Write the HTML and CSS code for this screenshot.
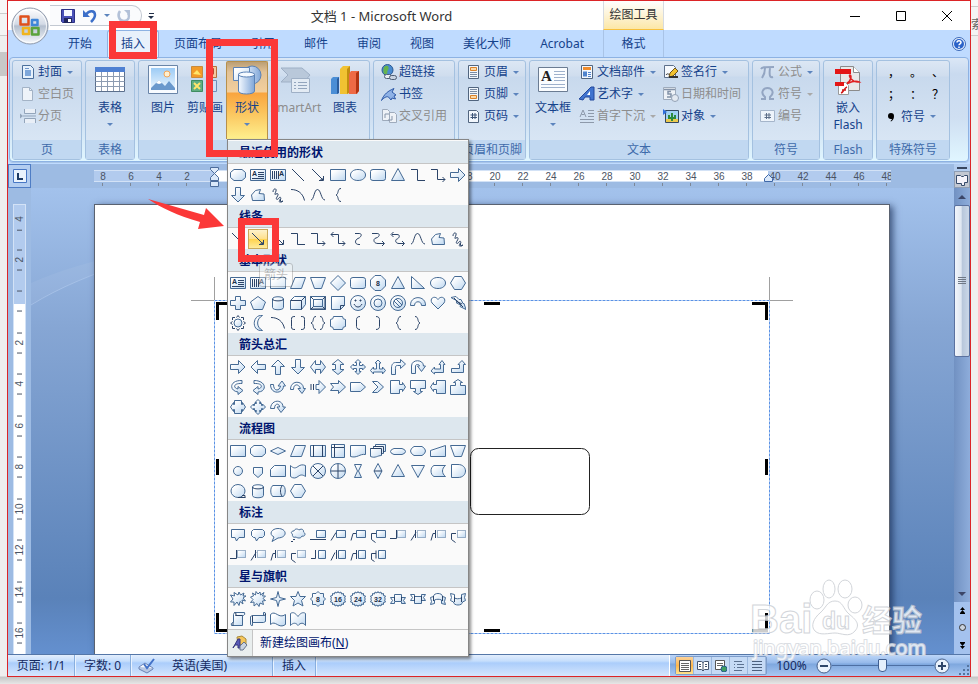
FILE: index.html
```html
<!DOCTYPE html>
<html lang="zh-CN">
<head>
  <meta charset="utf-8">
  <title>文档 1 - Microsoft Word</title>
  <link rel="stylesheet" href="styles.css">
</head>
<body>
  <!-- shared gradients -->
  <svg class="defs" width="0" height="0">
    <defs>
      <linearGradient id="shapeFill" x1="0" y1="0" x2="1" y2="1">
        <stop offset="0.2" stop-color="#ffffff"/><stop offset="1" stop-color="#bdd7f0"/>
      </linearGradient>
      <linearGradient id="blueFill" x1="0" y1="0" x2="1" y2="0">
        <stop offset="0" stop-color="#f4f9ff"/><stop offset="1" stop-color="#7fa6d8"/>
      </linearGradient>
      <linearGradient id="orbFill" x1="0" y1="0" x2="0" y2="1">
        <stop offset="0" stop-color="#ffffff"/><stop offset="0.45" stop-color="#d3dae6"/>
        <stop offset="0.5" stop-color="#b4bfcf"/><stop offset="1" stop-color="#f6f9fd"/>
      </linearGradient>
      <linearGradient id="skyFill" x1="0" y1="0" x2="0" y2="1">
        <stop offset="0" stop-color="#9ccbf5"/><stop offset="1" stop-color="#eef7ff"/>
      </linearGradient>
    </defs>
  </svg>

  <div class="behind behind-left"></div>

  <div class="window">
    <header class="header">
      <div class="title-left">
        <div class="quick">
          <button title="保存"><svg width="16" height="16" viewBox="0 0 16 16"><path d="M1.500 1.500h13v13h-12l-1-1z" fill="#4a52b8" stroke="#2c3186"/><path d="M4 2h8v6H4z" fill="#f5f8ff"/><path d="M4 10h8v5H4z" fill="#20265e"/><path d="M8 11h3v3H8z" fill="#fff"/></svg></button>
          <button title="撤消"><svg width="16" height="16" viewBox="0 0 16 16"><path d="M4 6.500C7 2 13 2 13 7c0 3-2 5-4 7" fill="none" stroke="#3c6fc9" stroke-width="2.500"/><path d="M1 2v7h7z" fill="#3c6fc9"/></svg></button>
          <i class="caret"></i>
          <button title="恢复"><svg width="16" height="16" viewBox="0 0 16 16"><path d="M4 3C1 7 3 13 8 13s6-5 4-8" fill="none" stroke="#b3c1d8" stroke-width="2.500"/><path d="M8 2h6v6z" fill="#b3c1d8"/></svg></button>
        </div>
        <button class="quick-more" title="自定义快速访问工具栏"><i class="bar"></i><i class="caret"></i></button>
        <h1>文档 1 - Microsoft Word</h1>
      </div>
      <div class="context-title">绘图工具</div>
      <div class="controls">
        <button title="最小化"><svg width="12" height="12" viewBox="0 0 12 12"><path d="M1 6.500h10" stroke="#000"/></svg></button>
        <button title="最大化"><svg width="12" height="12" viewBox="0 0 12 12"><path d="M1.500 1.500h9v9h-9z" fill="none" stroke="#000"/></svg></button>
        <button title="关闭"><svg width="12" height="12" viewBox="0 0 12 12"><path d="M1 1l10 10M11 1L1 11" stroke="#000"/></svg></button>
      </div>

      <nav class="tabs">
        <button>开始</button>
        <button class="active">插入</button>
        <button>页面布局</button>
        <button>引用</button>
        <button>邮件</button>
        <button>审阅</button>
        <button>视图</button>
        <button>美化大师</button>
        <button>Acrobat</button>
      </nav>
      <div class="context-tab"><button>格式</button></div>
      <div class="help"><button title="帮助"><svg width="14" height="14" viewBox="0 0 14 14"><circle cx="7" cy="7" r="6.500" fill="#e8f1fd" stroke="#3a68b8"/><circle cx="7" cy="7" r="5" fill="#2b63c9"/><path d="M5 5.500c0-2.500 4-2.500 4 0C9 7 7 6.800 7 8.300M7 9.500v1.500" fill="none" stroke="#fff" stroke-width="1.500"/></svg></button></div>

      <button class="orb" title="Office 按钮">
        <svg width="40" height="40" viewBox="0 0 40 40">
          <circle cx="20" cy="20" r="18" fill="url(#orbFill)" stroke="#8e99ab"/>
          <circle cx="20" cy="20" r="16.500" fill="none" stroke="#fff" stroke-opacity=".8"/>
          <g fill="none" stroke-width="2.500" stroke-linejoin="round">
            <path d="M10.500 10.500h8v8h-8z" stroke="#e0501c"/>
            <path d="M22 14h5.500v5H22z" stroke="#3f86d8"/>
            <path d="M13 22h6v6h-6z" stroke="#f0b41c"/>
            <path d="M22 22h6.500v6.500H22z" stroke="#5aa33c"/>
          </g>
        </svg>
      </button>
    </header>

    <section class="ribbon">
      <div class="group g-page">
        <div class="body">
          <div class="rows">
            <button><svg class="ic" viewBox="0 0 16 16"><path d="M2.500 1.500h8l3 3v10h-11z" fill="#e6f1fc" stroke="#4a6f9c"/><path d="M5 6h6v6H5z" fill="#7ea7da"/><path d="M5 4.500h4" stroke="#6e94c8"/></svg>封面<i class="caret"></i></button>
            <button disabled><svg class="ic" viewBox="0 0 16 16"><path d="M2.500 1.500h7l3 3v10h-10z" fill="#eef3f9" stroke="#a3b3c6"/><path d="M9.500 1.500v3h3" fill="none" stroke="#a3b3c6"/></svg>空白页</button>
            <button disabled><svg class="ic" viewBox="0 0 16 16"><path d="M4.500 1v4.500h11V1M4.500 15v-4.500h11V15M3 8h13" fill="#e9eff7" stroke="#93a5bb"/><path d="M0 5.500l3 2.500-3 2.500z" fill="#93a5bb"/></svg>分页</button>
          </div>
        </div>
        <footer>页</footer>
      </div>

      <div class="group g-table">
        <div class="body">
          <button class="big"><svg class="ic32" viewBox="0 0 32 32"><path d="M1.500 3.500h29v24h-29z" fill="#fff" stroke="#5b6f8c"/><path d="M1 3h30v5H1z" fill="#4f80d2"/><path d="M1.500 12.500h29M1.500 17.500h29M1.500 22.500h29M7.500 8v19M13.500 8v19M19.500 8v19M25.500 8v19" stroke="#8d9cb2"/></svg><span>表格</span><i class="caret"></i></button>
        </div>
        <footer>表格</footer>
      </div>

      <div class="group g-art">
        <div class="body">
          <button class="big"><svg class="ic32" viewBox="0 0 32 32"><path d="M1.500 1.500h29v28h-29z" fill="#f8fbff" stroke="#6a85a8"/><path d="M4 4h24v22H4z" fill="url(#skyFill)"/><circle cx="20" cy="10" r="3" fill="#fff0d0" stroke="#f3a659"/><path d="M4 24l8-8 6 6 4-5 6 7v2H4z" fill="#6a98cc"/><path d="M9 19l3-3 3 3-3 1z" fill="#fff"/></svg><span>图片</span></button>
          <button class="big"><svg class="ic32" viewBox="0 0 32 32"><path d="M2.500 2.500h11v11h-11z" fill="#f29b28" stroke="#c98a3c"/><path d="M4 10l4-4 4 5z" fill="#ffe66b"/><path d="M17.500 2.500h10v11h-10z" fill="#f5c9a0" stroke="#b4713c"/><path d="M21 6l4-2v7z" fill="#c1432d"/><path d="M2.500 16.500h11v11h-11z" fill="#5fae82" stroke="#3f8d62"/><path d="M5 19l6 6M11 19l-6 6" stroke="#ffe66b" stroke-width="2"/><path d="M17.500 16.500h10v11h-10z" fill="#cfe0f5" stroke="#6e8fb8"/></svg><span>剪贴画</span></button>
          <div class="dropdown">
            <button class="big open"><svg class="ic32" viewBox="0 0 32 32"><circle cx="21" cy="11" r="9" fill="url(#blueFill)" stroke="#5b82b5"/><path d="M2.500 3.500h16v13h-16z" fill="url(#shapeFill)" stroke="#5b82b5"/><path d="M7.500 10v17c0 4 16 4 16 0V10z" fill="url(#blueFill)" stroke="#5b82b5"/><ellipse cx="15.500" cy="10.500" rx="8" ry="2.500" fill="#f5faff" stroke="#5b82b5"/></svg><span>形状</span><i class="caret"></i></button>
            <div class="menu" id="shapeMenu">
              <div id="sections"></div>
              <button class="new-canvas">
                <span class="strip"><svg width="16" height="16" viewBox="0 0 16 16"><path d="M5 2l5-1 4 3v6H6z" fill="#f5c65a" stroke="#a88a3a"/><path d="M1 13L6 4l2 0v9H6v-3H3z" fill="#5a5bb8" stroke="#34357e"/><path d="M8 11l4-4 3 3-4 5H8z" fill="#c9d3e2" stroke="#66758c"/></svg></span>
                <span>新建绘图画布(<u>N</u>)</span>
              </button>
              <div class="tip">箭头</div>
            </div>
          </div>
          <button class="big wide" disabled><svg class="ic32" viewBox="0 0 32 32"><path d="M1 4h21l8 7-6 7H1l7-7z" fill="#b9c8da" stroke="#9fb0c6"/><path d="M11.500 14.500h18v14h-18z" fill="#e3ebf4" stroke="#9fb0c6"/><path d="M14 18.500h2m2 0h9m-13 3h2m2 0h9m-13 3h2m2 0h9" stroke="#93a5bd"/></svg><span>SmartArt</span></button>
          <button class="big"><svg class="ic32" viewBox="0 0 32 32"><path d="M2 15l2-2h6v16l-2 1H2z" fill="#4a8ed6"/><path d="M8 15l2-2v16l-2 1z" fill="#2a5d9f"/><path d="M11 5l3-3h7v26l-2 2h-8z" fill="#f1c232"/><path d="M18 5l3-3v26l-3 2z" fill="#c28e0e"/><path d="M20 10l2-3h8v20l-2 3h-8z" fill="#ee6a45"/><path d="M27 9l3-2v20l-3 3z" fill="#b23412"/></svg><span>图表</span></button>
        </div>
        <footer>插图</footer>
      </div>

      <div class="group g-link">
        <div class="body">
          <div class="rows">
            <button><svg class="ic" viewBox="0 0 16 16"><circle cx="6.500" cy="6" r="5.500" fill="#4a8bd0" stroke="#2c5a94"/><path d="M3 3c3-3 6 0 4 3s1 3-2 4-3-4-2-7z" fill="#67b44c"/><rect x="3.500" y="10.500" width="7" height="4" rx="2" fill="#e8edf4" stroke="#4f5f75"/><rect x="8.500" y="11.500" width="7" height="4" rx="2" fill="#c9d3e0" stroke="#4f5f75"/></svg>超链接</button>
            <button><svg class="ic" viewBox="0 0 16 16"><path d="M.5 14.500C3 8 7 5 13 2.500l-2 3.500 4 3-2 1 1.500 3-3.500-1-1 2-2.500-3c-2-1-5 1-7 3.500z" fill="#8fb2e6" stroke="#2f5aa8"/></svg>书签</button>
            <button disabled><svg class="ic" viewBox="0 0 16 16"><path d="M1.500 1.500h5l2 2v9h-7zM8.500 4.500h5l2 2v8h-7z" fill="#eef2f7" stroke="#9eabbc"/><path d="M4 10V6h4m3 2v4H7" fill="none" stroke="#8796ab"/></svg>交叉引用</button>
          </div>
        </div>
        <footer>链接</footer>
      </div>

      <div class="group g-hf">
        <div class="body">
          <div class="rows">
            <button><svg class="ic" viewBox="0 0 16 16"><path d="M2.500 1.500h10v13h-10z" fill="#f2f7fd" stroke="#51657f"/><path d="M4.500 3.500h6v3h-6z" fill="#fbd9a8" stroke="#d9822b"/><path d="M4 8.500h7M4 10.500h7M4 12.500h7" stroke="#7b8ca3"/></svg>页眉<i class="caret"></i></button>
            <button><svg class="ic" viewBox="0 0 16 16"><path d="M2.500 1.500h10v13h-10z" fill="#f2f7fd" stroke="#51657f"/><path d="M4.500 9.500h6v3h-6z" fill="#fbd9a8" stroke="#d9822b"/><path d="M4 3.500h7M4 5.500h7M4 7.500h7" stroke="#7b8ca3"/></svg>页脚<i class="caret"></i></button>
            <button><svg class="ic" viewBox="0 0 16 16"><path d="M2.500 2.500h8l2 2v10h-10z" fill="#f2f7fd" stroke="#51657f"/><path d="M6.500 5v6M9 5v6M4.500 7h6.500M4.500 9.500h6.500" stroke="#3c5578"/></svg>页码<i class="caret"></i></button>
          </div>
        </div>
        <footer>页眉和页脚</footer>
      </div>

      <div class="group g-text">
        <div class="body">
          <button class="big"><svg class="ic32" viewBox="0 0 32 32"><path d="M1.500 3.500h29v24h-29z" fill="#fbfdff" stroke="#6b7c93"/><text x="4" y="17" class="serif-a">A</text><path d="M17 7.500h11M17 10.500h11M17 13.500h11M17 16.500h11M4 20.500h24M4 23.500h24" stroke="#9eb1cc"/></svg><span>文本框</span><i class="caret"></i></button>
          <div class="rows parts">
            <button><svg class="ic" viewBox="0 0 16 16"><path d="M2.500 1.500h11v13h-11z" fill="#f2f7fd" stroke="#51657f"/><path d="M4 3h8v3H4z" fill="#ef8c2d"/><path d="M4 7.500h4v5H4z" fill="#4f83cc"/><path d="M9 8.500h3M9 10.500h3M9 12.500h3" stroke="#4f83cc"/></svg>文档部件<i class="caret"></i></button>
            <button><svg class="ic" viewBox="0 0 16 16"><path d="M0 13L12 1h3v13h-4v-3H6l-2 3z" fill="#3f73cf" stroke="#23489c"/><path d="M8 9l3-4v4z" fill="#fff"/></svg>艺术字<i class="caret"></i></button>
            <button disabled><svg class="ic" viewBox="0 0 16 16"><path d="M1 9L4 2l3 7M2.500 6.500h3M9 2.500h6M9 5.500h6M9 8.500h6M1 11.500h14M1 14.500h14" fill="none" stroke="#8d99aa"/></svg>首字下沉<i class="caret"></i></button>
          </div>
          <div class="rows">
            <button><svg class="ic" viewBox="0 0 16 16"><path d="M1.500 1.500h9l2 2v10h-11z" fill="#f6f9fd" stroke="#5c6f8a"/><path d="M3 11c2-3 3 1 5-1" fill="none" stroke="#333"/><path d="M7 9l5-5 3 3-5 5-4 1z" fill="#f2c230" stroke="#6e541c"/><path d="M6 13h9" stroke="#333" stroke-width="2"/></svg>签名行<i class="caret"></i></button>
            <button disabled><svg class="ic" viewBox="0 0 16 16"><path d="M.5 1.500h12v12H.5z" fill="#eef2f7" stroke="#9eabbc"/><path d="M1 3.500h11M8 5.500H5v2.500h3v3H4" fill="none" stroke="#8392a8" stroke-width="1.500"/><circle cx="12" cy="12" r="3.500" fill="#e3e9f1" stroke="#93a1b5"/></svg>日期和时间</button>
            <button><svg class="ic" viewBox="0 0 16 16"><path d="M2.500 2.500h13v12h-13z" fill="#9fd0f3" stroke="#33465f"/><path d="M3 11h12v3H3z" fill="#e9c94e"/><path d="M9 5v8M6 7v3h6V7" fill="none" stroke="#2c8a3c" stroke-width="2"/><path d="M0 1l4 3-4 3z" fill="#2f6fdc"/></svg>对象<i class="caret"></i></button>
          </div>
        </div>
        <footer>文本</footer>
      </div>

      <div class="group g-sym">
        <div class="body">
          <div class="rows">
            <button class="off"><svg class="ic" viewBox="0 0 16 16"><path d="M1 5c1-2 3-2 13-2M5 4c0 5-1 7-3 10M10 4c-1 8 0 10 3 9" fill="none" stroke="#93a5c2" stroke-width="2"/></svg>公式<i class="caret"></i></button>
            <button disabled><svg class="ic" viewBox="0 0 16 16"><path d="M1 13h4v-2C0 7 3 2 7.500 2S15 7 10 11v2h4" fill="none" stroke="#93a5c2" stroke-width="2"/></svg>符号<i class="caret"></i></button>
            <button disabled><svg class="ic" viewBox="0 0 16 16"><path d="M.5 2.500h14v11H.5z" fill="#eef4fb" stroke="#a5b5ca"/><path d="M6.500 5v6M9 5v6M4.500 7h6.500M4.500 9.500h6.500" stroke="#5c6e88"/></svg>编号</button>
          </div>
        </div>
        <footer>符号</footer>
      </div>

      <div class="group g-flash">
        <div class="body">
          <button class="big"><svg class="ic32" viewBox="0 0 32 32"><path d="M8.500 2.500h13l6 6v18h-19z" fill="#e9e9e9" stroke="#8b8b8b"/><path d="M21.500 2.500v6h6" fill="#fff" stroke="#8b8b8b"/><path d="M3 5h16v5H3z" fill="#e41616"/><path d="M14 20c5-2 6-9 4-9s2 8 9 7c-4-2-8 0-13 2z" fill="none" stroke="#e02020" stroke-width="1.500"/><path d="M6.500 18.500h7l3 3v9h-10z" fill="#fff" stroke="#9a9a9a"/><path d="M3 18h9v4H3z" fill="#e41616"/><path d="M9 29c3-1 3-5 6-6m-5 3h4" fill="none" stroke="#d01818" stroke-width="1.500"/></svg><span>嵌入</span><span>Flash</span></button>
        </div>
        <footer>Flash</footer>
      </div>

      <div class="group g-special">
        <div class="body">
          <div class="marks">
            <button>，</button><button>。</button><button>、</button>
            <button>；</button><button>：</button><button>？</button>
            <button class="mark-menu"><svg class="ic" viewBox="0 0 16 16"><path d="M8 5a3 3 0 1 1 0 6 3 3 0 0 1 0-6zM11 8c0 3-1 4-3 5.500L7.500 13c1-1 2-2 1.500-3z" fill="#000"/></svg>符号<i class="caret"></i></button>
          </div>
        </div>
        <footer>特殊符号</footer>
      </div>
    </section>

    <main class="work">
      <div class="tab-type"><button title="制表符"><svg width="14" height="14" viewBox="0 0 14 14"><path d="M.5.500h13v13H.5z" fill="#eaf3fd" stroke="#4877c4"/><path d="M5 4v6h5" fill="none" stroke="#1d3a63" stroke-width="2"/></svg></button></div>
      <div class="hruler">
        <div class="numbers" id="hnums"></div>
        <div class="ticks"></div>
        <svg class="indent indent-left" width="9" height="20" viewBox="0 0 9 20"><path d="M.5.500h8v2l-4 4-4-4zM4.500 6.500l4 4v3h-8v-3zM.5 14.500h8v5h-8z" fill="#dbe9fa" stroke="#4d6d9c"/></svg>
        <svg class="indent indent-right" width="9" height="8" viewBox="0 0 9 8"><path d="M.5 7.500v-3l4-4 4 4v3z" fill="#dbe9fa" stroke="#3f68a8"/></svg>
      </div>

      <div class="vruler"><div class="numbers" id="vnums"></div></div>

      <div class="desk">
        <svg class="waves" viewBox="0 0 240 180" preserveAspectRatio="none"><path d="M0 95C80 60 160 60 240 10v20C150 60 80 70 0 117z" fill="#fff" opacity=".06"/><path d="M0 117C60 80 130 66 240 26" fill="none" stroke="#c9defa" stroke-opacity=".35"/></svg>
        <div class="page">
          <svg class="canvas" width="604" height="377" viewBox="0 0 604 377">
            <path d="M0 23.500h23M23.500 0v23M579 23.500h23M578.500 0v23" stroke="#a0a0a0" fill="none"/>
            <path d="M23.500 23.500h555v333h-555z" fill="none" stroke="#5b92e5" stroke-dasharray="3 1"/>
            <path d="M26.500 43V26.500H43M293 26.500h16M561 26.500h14.500V43M26.500 182v16M575.500 182v16M26.500 336v17.500H43M293 353.500h16M575.500 336v17.500H561" fill="none" stroke="#000" stroke-width="3"/>
            <rect x="279.500" y="171.500" width="119" height="66" rx="8" fill="#fff" stroke="#222"/>
          </svg>
        </div>
      </div>

      <div class="scroll">
        <i class="split"></i>
        <button class="ruler-toggle" title="标尺"><svg width="14" height="14" viewBox="0 0 14 14"><path d="M1.500 2.500h4l1 1h2l1-1h3v7h-3v3h-3v-2h-5z" fill="#f5f3fa" stroke="#364b6b"/></svg></button>
        <button class="arrow up" title="向上"></button>
        <div class="track"><div class="thumb"></div></div>
        <button class="arrow down" title="向下"></button>
        <div class="browse">
          <button title="前一页"><svg width="9" height="9" viewBox="0 0 9 9"><path d="M4.500 1L7 4H2zM4.500 4L7 7H2zM2 7h5v1H2z"/></svg></button>
          <button title="选择浏览对象"><svg width="9" height="9" viewBox="0 0 9 9"><circle cx="4.500" cy="4.500" r="3" fill="#c9d2dd" stroke="#333"/></svg></button>
          <button title="下一页"><svg width="9" height="9" viewBox="0 0 9 9"><path d="M4.500 8L7 5H2zM4.500 5L7 2H2zM2 1h5v1H2z"/></svg></button>
        </div>
      </div>
    </main>

    <footer class="status">
      <button class="s-page">页面: 1/1</button>
      <button class="s-words">字数: 0</button>
      <button class="s-spell" title="校对"><svg width="18" height="16" viewBox="0 0 18 16"><path d="M1 9l6-4 8 5-5 4z" fill="#f7faff" stroke="#6b84b5"/><path d="M1 9v2l8 4 6-4v-1" fill="#b8c8e4" stroke="#6b84b5"/><path d="M6 6l3 4 7-9" fill="none" stroke="#4372c8" stroke-width="2"/></svg></button>
      <button class="s-lang">英语(美国)</button>
      <button class="s-mode">插入</button>
      <div class="view-tools">
        <div class="views">
          <button class="on" title="页面视图"><svg width="12" height="12" viewBox="0 0 12 12"><path d="M.5.500h11v11H.5z" fill="#fff" stroke="#555"/><path d="M2 3.500h8M2 5.500h8M2 7.500h8M2 9.500h8" stroke="#666"/></svg></button>
          <button title="阅读版式"><svg width="12" height="12" viewBox="0 0 12 12"><path d="M.5 1.500h4l1.500 1 1.500-1h4v8h-4L6 11l-1.500-1.500h-4zM6 2v9" fill="#fff" stroke="#44546e"/><path d="M2 4.500h2M2 6.500h2M8 4.500h2M8 6.500h2" stroke="#44546e"/></svg></button>
          <button title="Web 版式"><svg width="12" height="12" viewBox="0 0 12 12"><path d="M.5.500h9v9h-9z" fill="#fff" stroke="#555"/><path d="M2 3.500h6M2 5.500h6" stroke="#666"/><circle cx="9" cy="9" r="3" fill="#3f9d62" stroke="#265d8c"/></svg></button>
          <button title="大纲视图"><svg width="12" height="12" viewBox="0 0 12 12"><path d="M1 1.500h8M4 4.500h7M4 7.500h7M1 10.500h8M1 4.500h1M1 7.500h1" stroke="#5b7190"/></svg></button>
          <button title="普通视图"><svg width="12" height="12" viewBox="0 0 12 12"><path d="M1 1.500h10M1 4.500h10M1 7.500h10M1 10.500h10" stroke="#4c617f"/></svg></button>
        </div>
        <button class="percent">100%</button>
        <button class="round" title="缩小"><svg width="16" height="16" viewBox="0 0 16 16"><circle cx="8" cy="8" r="7" fill="#eaf2fc" stroke="#45608c"/><path d="M4 8h8" stroke="#2f4669" stroke-width="2"/></svg></button>
        <input type="range" min="0" max="100" value="49" aria-label="显示比例">
        <button class="round" title="放大"><svg width="16" height="16" viewBox="0 0 16 16"><circle cx="8" cy="8" r="7" fill="#eaf2fc" stroke="#45608c"/><path d="M4 8h8M8 4v8" stroke="#2f4669" stroke-width="2"/></svg></button>
        <svg class="grip" width="12" height="12" viewBox="0 0 12 12"><path d="M9 1h2v2H9zM5 5h2v2H5zM9 5h2v2H9zM1 9h2v2H1zM5 9h2v2H5zM9 9h2v2H9z" fill="#54749f"/></svg>
      </div>
    </footer>

    <svg class="watermark" width="180" height="84" viewBox="0 0 180 84">
      <g fill="#ffffff" stroke="#c8ccd2">
        <ellipse cx="67" cy="23" rx="7" ry="9"/>
        <ellipse cx="79" cy="12" rx="6" ry="9"/>
        <ellipse cx="95" cy="12" rx="7" ry="9"/>
        <ellipse cx="105" cy="28" rx="7" ry="8"/>
        <path d="M85 24c8 0 8 8 14 13s12 10 6 17-14 2-20 2-15 3-20-2-1-13 5-18 7-12 15-12z"/>
        <text x="0" y="56" class="wm-bai">Bai</text>
        <text x="72" y="52" class="wm-du">du</text>
        <text x="112" y="54" class="wm-cn">经验</text>
      </g>
      <text x="3" y="78" class="wm-url">jingyan.baidu.com</text>
    </svg>

    <!-- tutorial marks over the window -->
    <div class="mark mark-tab"></div>
    <div class="mark mark-shapes"></div>
    <div class="mark mark-arrow"></div>
    <svg class="pointer" width="78" height="34" viewBox="0 0 78 34"><path d="M0 1l56 16 2-7 18 18-26 3 2-7C30 18 12 9 0 1z" fill="#fb3838"/></svg>
  </div>

  <div class="behind behind-right"><span>索</span></div>

  <script src="shapes.js"></script>
</body>
</html>
```

FILE: styles.css
```css
:root {
	--text: #15428b;
	--off: #8d8d8d;
	--line: #8db2e3;
	--red: #fb3838;
	--shape: #456a94;
}

* {
	box-sizing: border-box;
}

body {
	margin: 0;
	min-height: 100vh;
	display: flex;
	padding-bottom: 7px;
	background: linear-gradient(#efefef 0, #efefef calc(100% - 8px), #c6c6c6 calc(100% - 7px), #e6e6e6 100%);
	font-family: "Noto Sans", "Noto Sans CJK SC", sans-serif;
	font-size: 12px;
	line-height: 16px;
	color: var(--text);
	overflow-x: hidden;
}

button {
	font: inherit;
	color: inherit;
	background: none;
	border: 0;
	padding: 0;
	margin: 0;
	white-space: nowrap;
}

svg {
	display: block;
	flex: none;
}

.defs {
	position: absolute;
}

/* what shows beside the window */
.behind {
	width: 7px;
	flex: none;
	overflow: hidden;
	background: linear-gradient(#f7f7f7 6px, #ccc 6px, #ccc 7px, #f4f4f4 7px, #f4f4f4 35px, #ccc 35px, #ccc 36px, transparent 36px);
}

.behind-left {
	background: linear-gradient(#f7f7f7 13px, #ccc 13px, #ccc 14px, #f4f4f4 14px, #f4f4f4 35px, #ccc 35px, #ccc 36px, #efefef 36px, #efefef 52px, #c8c8c8 52px, #c8c8c8 76px, transparent 76px);
}

.behind-right {
	padding-top: 17px;
	color: #666;
}

.window {
	position: relative;
	flex: 1;
	min-width: 0;
	display: flex;
	flex-direction: column;
	border: 1px solid #dc2427;
	background: #bfdbff;
}

/* title bar and tabs */
.header {
	position: relative;
	display: grid;
	grid-template-columns: 595px 61px 1fr;
	grid-template-rows: 29px 27px;
	background: linear-gradient(#fff 29px, #bfdbff 29px);
}

.title-left {
	display: flex;
	align-items: center;
}

.quick {
	display: flex;
	align-items: center;
	gap: 6px;
	height: 21px;
	width: 92px;
	margin-left: 42px;
	padding-left: 10px;
	border: 1px solid #c3c9d2;
	border-left: 0;
	border-radius: 0 10px 10px 0;
	background: #fafbfd;
}

.quick .caret {
	margin: 0;
}

.quick-more {
	display: flex;
	flex-direction: column;
	align-items: center;
	gap: 2px;
	width: 18px;
}

.bar {
	width: 5px;
	height: 1px;
	background: #222f49;
}

.quick-more .caret {
	margin: 0;
	border-top-color: #222f49;
}

.title-left h1 {
	flex: 1;
	margin: 0;
	font-size: 13px;
	font-weight: normal;
	text-align: center;
	color: #333;
}

.context-title {
	display: flex;
	align-items: center;
	justify-content: center;
	color: #333;
	border-left: 1px solid #d6dbe2;
	border-right: 1px solid #d6dbe2;
	border-bottom: 1px solid #f8c13c;
	background: linear-gradient(#fff, #fdf3d6 50%, #fce7a6);
}

.controls {
	display: flex;
	justify-content: flex-end;
}

.controls button {
	width: 46px;
	display: flex;
	align-items: center;
	justify-content: center;
}

.tabs {
	display: flex;
	gap: 1px;
	padding-left: 46px;
}

.tabs button {
	padding: 0 14px;
}

.tabs .active {
	border: 1px solid var(--line);
	border-bottom: 0;
	border-radius: 3px 3px 0 0;
	padding: 0 13px;
	background: #e8f1fb;
}

.context-tab {
	display: flex;
	justify-content: center;
	border-left: 1px solid #a9c3e6;
	border-right: 1px solid #a9c3e6;
}

.help {
	display: flex;
	justify-content: flex-end;
	align-items: center;
	padding-right: 4px;
}

.orb {
	position: absolute;
	left: 2px;
	top: 5px;
}

/* ribbon */
.ribbon {
	display: flex;
	gap: 3px;
	margin: 0 1px 2px;
	padding: 2px 2px 1px;
	border: 1px solid var(--line);
	border-radius: 4px;
	background: linear-gradient(#dbe7f6, #c9daef 16px, #cfdff2 60px, #e0f6ff);
	box-shadow: 0 1px 0 #a9c5e8;
}

.group {
	height: 100px;
	flex: none;
	display: flex;
	flex-direction: column;
	border: 1px solid #a4c1e0;
	border-radius: 3px;
	background: linear-gradient(#dce7f4, #cfddee 15px, #c8d9ed 16px, #dde9f6);
}

.group > footer {
	height: 19px;
	line-height: 20px;
	text-align: center;
	color: #3e6aaa;
	background: #c1d8f1;
}

.g-page {
	width: 70px;
}

.g-hf,
.g-sym {
	width: 68px;
}

.g-table,
.g-flash {
	width: 50px;
}

.g-art {
	width: 232px;
}

.g-link {
	width: 82px;
}

.g-text {
	width: 220px;
}

.g-special {
	width: 74px;
}

.body {
	flex: 1;
	display: flex;
	padding: 0 3px;
}

.rows {
	display: flex;
	flex-direction: column;
	padding-left: 4px;
}

.rows button {
	display: flex;
	align-items: center;
	gap: 2px;
	height: 22px;
}

.g-text .body {
	padding: 0 2px;
}

.g-text .parts {
	width: 84px;
	margin-left: 1px;
}

.ic {
	width: 16px;
	height: 16px;
}

.ic32 {
	width: 32px;
	height: 32px;
}

.caret {
	width: 5px;
	height: 3px;
	margin-left: 3px;
	border: 3px solid transparent;
	border-top-color: #5c84bd;
	border-bottom: 0;
}

.ribbon button:disabled,
.ribbon .off {
	color: var(--off);
}

.ribbon button:disabled .caret {
	border-top-color: #a9a9a9;
}

.big {
	width: 42px;
	height: 78px;
	display: flex;
	flex-direction: column;
	align-items: center;
	padding-top: 3px;
}

.big span {
	height: 17px;
	line-height: 17px;
}

.big .ic32 + span {
	margin-top: 3px;
}

.big .caret {
	margin: 7px 0 0;
}

.big.wide {
	width: 56px;
}

.big.open {
	border: 1px solid #b7904c;
	border-bottom: 0;
	padding-top: 2px;
	border-radius: 2px 2px 0 0;
	background: linear-gradient(#bb9f74, #e2c296 10px, #f3cf9d 30px, #f9a43e 31px, #fbc35c 50px, #fef08e);
}

.serif-a {
	font: bold 15px "Liberation Serif", serif;
	fill: #222;
}

.marks {
	display: grid;
	grid-template-columns: 22px 22px 22px;
	grid-auto-rows: 22px;
	padding-left: 3px;
	color: #000;
}

.marks button {
	font-family: "Noto Sans CJK SC", sans-serif;
}

.marks .mark-menu {
	grid-column: 1 / 4;
	display: flex;
	align-items: center;
	gap: 2px;
	color: var(--text);
}

/* shapes drop-down */
.dropdown {
	position: relative;
}

.menu {
	position: absolute;
	z-index: 5;
	top: 78px;
	left: 1px;
	width: 242px;
	padding-top: 1px;
	border: 1px solid #868686;
	background: #fafafa;
	box-shadow: 2px 2px 3px rgba(0, 0, 0, .45);
}

.menu h2 {
	margin: 0 0 1px;
	height: 23px;
	padding-left: 11px;
	font-size: 12px;
	line-height: 24px;
	color: #00156e;
	background: #dde7ee;
	border-bottom: 1px solid #c5c5c5;
}

.shapes {
	display: grid;
	grid-template-columns: repeat(12, 20px);
	grid-auto-rows: 20px;
}

.shapes button {
	display: grid;
	place-items: center;
}

.shapes button.hot {
	border: 1px solid #c9a85a;
	background: linear-gradient(#fdf2cc, #ffe08a 50%, #ffd24d 50%, #ffeb9c);
}

.shapes svg {
	fill: url(#shapeFill);
	stroke: var(--shape);
}

.shapes .nofill {
	fill: none;
	stroke: #2c4468;
}

.shapes .dot {
	stroke-dasharray: 1 1;
}

.shapes text {
	stroke: none;
	fill: #1c2f4a;
	font: bold 7px "Liberation Sans", sans-serif;
	text-anchor: middle;
}

.new-canvas {
	display: flex;
	align-items: center;
	width: 100%;
	height: 27px;
	border-top: 1px solid #c5c5c5;
	color: #00156e;
	gap: 7px;
}

.strip {
	display: grid;
	place-items: center;
	width: 25px;
	height: 26px;
	background: #e9eeee;
	border-right: 1px solid #c5c5c5;
}

.tip {
	position: absolute;
	left: 31px;
	top: 123px;
	padding: 3px 4px;
	border: 1px solid #767676;
	border-radius: 3px;
	color: #555;
	background: #fff;
	opacity: .35;
}

/* rulers and document */
.work {
	flex: 1;
	display: grid;
	grid-template-columns: 23px 1fr 16px;
	grid-template-rows: 24px 1fr;
	background: #9dbbe3;
}

.tab-type {
	display: grid;
	place-items: center;
	border: 1px solid #4f7dc5;
	background: #b3cdf0;
}

.hruler {
	position: relative;
	margin: 0 63px;
	padding-top: 6px;
	overflow: hidden;
}

.hruler .numbers {
	display: flex;
	height: 12px;
	border-top: 1px solid #d3e2f6;
	border-bottom: 1px solid #d3e2f6;
	background: linear-gradient(90deg, #b2cbee 120px, #fff 120px, #fff 674px, #b2cbee 674px);
}

.numbers span {
	flex: none;
	width: 28px;
	font: 10px/11px "Liberation Sans", sans-serif;
	text-align: center;
	color: #4b5464;
}

.hruler .numbers span:first-child {
	margin-left: -5px;
}

.ticks {
	height: 3px;
	margin-top: 1px;
	margin-left: 8px;
	background: repeating-linear-gradient(90deg, #7d8796 0, #7d8796 1px, transparent 1px, transparent 28px);
}

.indent {
	position: absolute;
}

.indent-left {
	left: 116px;
	top: 3px;
}

.indent-right {
	left: 670px;
	top: 10px;
}

.vruler {
	padding: 16px 5px 0;
	background: #9dbbe3;
}

.vruler .numbers {
	display: flex;
	flex-direction: column;
	height: 100%;
	border: 1px solid #d3e2f6;
	border-bottom: 0;
	background: linear-gradient(#b2cbee 99px, #fff 99px);
}

.vruler .numbers span {
	flex: 6;
	width: 11px;
	display: flex;
	align-items: center;
	justify-content: center;
	writing-mode: vertical-rl;
	transform: rotate(180deg);
	background: linear-gradient(#4b5464, #4b5464) 3px 25% / 5px 1px no-repeat, linear-gradient(#4b5464, #4b5464) 3px 75% / 5px 1px no-repeat;
}

.vruler .numbers span:first-child {
	flex: 4;
	padding-top: 6px;
	background: linear-gradient(#4b5464, #4b5464) 3px 25% / 5px 1px no-repeat;
}

.desk {
	position: relative;
	display: flex;
	padding: 16px 64px 0 63px;
	overflow: hidden;
	background: linear-gradient(#a3c2ec, #86a6d4 30%, #5a82b9 88%, #6490cf);
}

.waves {
	position: absolute;
	left: 0;
	top: 0;
	width: 240px;
	height: 180px;
}

.page {
	position: relative;
	flex: 1;
	padding: 72px 0 0 96px;
	border: 1px solid #5a6270;
	border-bottom: 0;
	background: #fff;
	box-shadow: 3px 2px 7px rgba(20, 40, 80, .7);
}

.watermark {
	position: absolute;
	right: 40px;
	bottom: 15px;
	opacity: .8;
}

.wm-bai {
	font: bold 40px "Liberation Sans", sans-serif;
}

.wm-du {
	font: bold 23px "Liberation Sans", sans-serif;
}

.wm-cn {
	font: bold 30px "Noto Sans CJK SC", sans-serif;
}

.wm-url {
	font: 20px "Noto Sans", sans-serif;
	fill: #fff;
	stroke: #d3d7dd;
	stroke-width: 2px;
	paint-order: stroke;
}

.scroll {
	grid-column: 3;
	grid-row: 1 / 3;
	display: flex;
	flex-direction: column;
	background: linear-gradient(90deg, #7191c2, #8eaddb);
}

.split {
	height: 7px;
	border: solid #b3cdf0;
	border-width: 3px 3px 2px;
	background: #38465f;
}

.ruler-toggle {
	height: 17px;
	display: grid;
	place-items: center;
	border: 1px solid #8e9db3;
	background: #c3c8d2;
}

.arrow {
	height: 17px;
	display: grid;
	place-items: center;
}

.arrow::before {
	content: "";
	border: 4px solid transparent;
	border-top: 0;
	border-bottom-color: #3c4668;
}

.arrow.down::before {
	border-top: 4px solid #3c4668;
	border-bottom: 0;
}

.track {
	flex: 1;
}

.thumb {
	height: 40%;
	border: 1px solid #5a719f;
	border-radius: 2px;
	background: repeating-linear-gradient(#6f7885 0, #6f7885 1px, transparent 1px, transparent 2px) center / 8px 8px no-repeat, linear-gradient(90deg, #f1f5fb, #dfe7f1 45%, #b7c6da 50%, #cbd8e8);
}

.browse {
	height: 52px;
	display: flex;
	flex-direction: column;
	justify-content: space-around;
	align-items: center;
	background: #a4c2ee;
}

/* status bar */
.status {
	display: flex;
	height: 22px;
	border-top: 1px solid #5577a8;
	color: #152a61;
	background: linear-gradient(#e3eefd, #c6defc 6px, #abcdfb 8px, #d5e6fd);
}

.status > button {
	border-right: 1px solid #88aede;
	box-shadow: 1px 0 #e8f2ff;
}

.s-page {
	width: 67px;
}

.s-words {
	width: 56px;
}

.status > .s-spell {
	display: grid;
	place-items: center;
	width: 32px;
	border: 0;
	box-shadow: none;
}

.s-lang {
	width: 110px;
	padding-left: 9px;
	text-align: left;
}

.s-mode {
	width: 43px;
}

.view-tools {
	margin-left: auto;
	width: 301px;
	display: flex;
	align-items: center;
	padding: 0 0 0 5px;
	border-left: 1px solid #fff;
	background: linear-gradient(#bdd6f8, #95b9ea 8px, #7ea7de 9px, #a9c8f2);
}

.views {
	display: flex;
	border: 1px solid #7d9cc9;
	border-radius: 2px;
	background: #c5daf5;
}

.views button {
	width: 18px;
	height: 17px;
	display: grid;
	place-items: center;
	border-right: 1px solid #9cb8de;
}

.views .on {
	background: linear-gradient(#fbd29b, #fdb64e 50%, #ffe38c);
}

.percent {
	width: 49px;
}

.view-tools input {
	appearance: none;
	-webkit-appearance: none;
	flex: 1;
	min-width: 0;
	margin: 0;
	height: 16px;
	background: linear-gradient(#4d6fa3, #4d6fa3) center / 100% 1px no-repeat;
}

.view-tools input::-webkit-slider-thumb {
	-webkit-appearance: none;
	width: 9px;
	height: 13px;
	border: 1px solid #3f5f92;
	border-radius: 1px 1px 4px 4px;
	background: #e4effc;
}

.grip {
	margin-left: 8px;
	align-self: flex-end;
}

/* tutorial marks */
.mark {
	position: absolute;
	z-index: 8;
	border: 7px solid var(--red);
}

.mark-tab {
	left: 101px;
	top: 20px;
	width: 48px;
	height: 38px;
}

.mark-shapes {
	left: 198px;
	top: 38px;
	width: 72px;
	height: 118px;
}

.mark-arrow {
	left: 230px;
	top: 217px;
	width: 41px;
	height: 44px;
}

.pointer {
	position: absolute;
	z-index: 8;
	left: 140px;
	top: 197px;
}
```

FILE: shapes.js
```js
// Each icon is on a 16x16 grid. Parts are split by "|".
// "~" = line only, "." = dotted box, "t:" = centred text
var icons = {
	line: "~M2 2l12 12",
	arrow: "~M2 2l11 11M13.500 9v4.500H9M12 11v2h-2",
	arrow2: "~M3 3l10 10M13.500 9v4.500H9M2.500 7V2.500H7",
	rect: "M.5 2.500h15v11H.5z",
	oval: "M8 2.500c10 0 10 11 0 11s-10-11 0-11z",
	pill: "M4 2.500h8l3.500 3v5l-3.500 3H4l-3.500-3v-5z",
	rounded: "M3 2.500h10q2.500 0 2.500 2v7q0 2-2.500 2H3q-2.500 0-2.500-2v-7q0-2 2.500-2z",
	text: "M.5 2.500h15v11H.5z|~M8 5.500h6M8 7.500h6M8 9.500h6M2 11.500h12|a:4.500,9,A",
	vtext: "M.5 2.500h15v11H.5z|~M2.500 4v8M4.500 4v8M6.500 4v8M8.500 4v8|a:11.500,9,A",
	tri: "M8 1.500l6.500 12h-13z",
	elbow: "~M1 2.500h6.500v11H15",
	elbowArrow: "~M1 2.500h6.500v10H15M12.500 10l2.500 2.500-2.500 2.500",
	elbowArrow2: "~M1 3.500h7.500v9H15M12.500 10l2.500 2.500-2.500 2.500M3.500 1L1 3.500 3.500 6",
	right: "M.5 5.500h8v-4l6.500 6.500-6.500 6.500v-4h-8z",
	left: "M15.500 5.500h-8v-4L1 8l6.500 6.500v-4h8z",
	up: "M5.500 15.500v-8h-4L8 1l6.500 6.500h-4v8z",
	down: "M5.500.500v8h-4L8 15l6.500-6.500h-4v-8z",
	freeform: "M2.500 13.500L1.500 8l4-4.500 5-1-1.500 4 5 .5 .500 6.500z",
	scribble: "~M3 5c0-4 4-4 3-1s-2 4 0 3 3 0 1 3 1 3 2 1 3 0 1 2 0 3 3 1M10 12l1 3 2-1",
	arc: "~M1 2.500c7 0 12 4 13.500 11",
	curve: "~M1 13C4 13 4 2.500 7.500 2.500S11 13 15 13",
	lbrace: "~M11 1.500C7 1.500 9 7 6 8c3 1 1 6.500 5 6.500",
	rbrace: "~M5 1.500C9 1.500 7 7 10 8c-3 1-1 6.500-5 6.500",
	scurve: "~M5 2.500h4c4 0 2 4-1 5s-4 6 1 6h1",
	scurveArrow: "~M2 2.500h5c4 0 2 4-1 4.500s-3 5.500 2 5.500h6M12 10l2.500 2.500L12 15",
	scurveArrow2: "~M2 3.500h5c4 0 2 4 0 4.500s-2 4.500 2 4.500h5M12 10l2.500 2.500L12 15M3.500 1L1 3.500 3.500 6",
	para: "M5 2.500h10.500l-4 11H.5z",
	trapInv: "M.5 2.500h15l-4 11h-7z",
	diamond: "M8 .500L15.500 8 8 15.500.500 8z",
	octagon: "M5 .500h6l4.500 4.500v6L11 15.500H5L.500 11V5z|t:8",
	rtri: "M1.500 1.500l13 12h-13z",
	hex: "M4.500 1.500h7L15.500 8l-4 6.500h-7L.500 8z",
	plus: "M5.500 1.500h5v4h5v5h-5v4h-5v-4h-5v-5h5z",
	pent: "M8 1.500L15.500 7l-3 7.500h-9L.500 7z",
	can: "M2.500 4v8.500c0 3 11 3 11 0V4c0-3-11-3-11 0z|~M2.500 4c0 2.500 11 2.500 11 0",
	cube: "M.5 5.500l4-4h11v8l-4 5H.500z|~M.5 5.500h11v9M11.500 5.500l4-4",
	bevel: "M.5 1.500h15v13H.5z|M3.500 4.500h9v7h-9z|~M.5 1.500l3 3M15.500 1.500l-3 3M.5 14.500l3-3M15.500 14.500l-3-3M1 14h14V2",
	fold: "M1.500 1.500h13v9l-4 4h-9z|~M14.500 10.500h-4v4",
	smiley: "M8 .500a7.500 7.500 0 1 1 0 15 7.500 7.500 0 0 1 0-15z|~M4.500 5.500h2M9.500 5.500h2M4 9c2 4 6 4 8 0M5.500 4.500v2M10.500 4.500v2",
	donut: "M8 .500a7.500 7.500 0 1 1 0 15 7.500 7.500 0 0 1 0-15z|M8 4a4 4 0 1 1 0 8 4 4 0 0 1 0-8z",
	no: "M8 .500a7.500 7.500 0 1 1 0 15 7.500 7.500 0 0 1 0-15z|M8 3.500a4.500 4.500 0 1 1 0 9 4.500 4.500 0 0 1 0-9z|M4 6l6 6 2-2-6-6z",
	blockArc: "M.5 10.500C0 0 16 0 15.500 10.500h-4c0-5-7-5-7 0z",
	heart: "M8 14L2 8C-1 3 5 0 8 4.500 11 0 17 3 14 8z",
	bolt: "M1 2.500L6 1.500l3 3h2l2 4h1l2 6-6-3 1-1-5-3 2-1z|~M4 3l9 9M6 6l6 3",
	sun: "M8 4a4 4 0 1 1 0 8 4 4 0 0 1 0-8z|~M6.500 2.500L8 .500l1.500 2M6.500 13.500l1.500 2 1.500-2M2.500 6.500L.500 8l2 1.500M13.500 6.500l2 1.500-2 1.500M2.500 5V2.500H5M11 2.500h2.500V5M2.500 11v2.500H5M11 13.500h2.500V11",
	moon: "M12.500.500C2-1 1 17 12.500 15.500 6 12 6 4 12.500.500z",
	brackets: "~M5 1.500c-3 0-3.500.500-3.500 3v7c0 2.500.500 3 3.500 3M11 1.500c3 0 3.500.500 3.500 3v7c0 2.500-.500 3-3.500 3",
	braces: "~M6 1.500C2 1.500 4.500 7 1 8c3.500 1 1 6.500 5 6.500M10 1.500c4 0 1.500 5.500 5 6.500-3.500 1-1 6.500-5 6.500",
	plaque: "M3.500 1.500h9q0 3 3 3v7q-3 0-3 3h-9q0-3-3-3v-7q3 0 3-3z",
	lbracket: "~M10 1.500c-3 0-3.500 2-3.500 3v7c0 1 .500 3 3.500 3",
	rbracket: "~M6 1.500c3 0 3.500 2 3.500 3v7c0 1-.500 3-3.500 3",
	leftRight: "M.5 8l5-6.500v4h5v-4l5 6.500-5 6.500v-4h-5v4z",
	upDown: "M8 .500l6 5h-3.500v5H14l-6 5-6-5h3.500v-5H2z",
	quad: "M8 .500l3 3H9.500v3h3V5l3 3-3 3V9.500h-3v3H11l-3 3-3-3h1.500v-3h-3V11l-3-3 3-3v1.500h3v-3H5z",
	triArrow: "M8 1l3 3H9.500v6h3V8l3 3.500-3 3.500v-2h-9v2l-3-3.500L3.500 8v2h3V4H5z",
	bent: "M1.500 15.500V9c0-4 2-5.500 4-5.500h5v-3l5 4.500-5 4.500v-3h-3c-2 0-2 1-2 3v6z",
	uturn: "M1.500 14.500V7c0-7 12-7 12 0h2l-4 5.500-4-5.500h2c0-2-4-2-4 0v7.500z",
	leftUp: "M12 1.500l3 4h-1.500v8h-9V15L1 12l3.500-4v2h6V5.500H9z",
	bentUp: "M12 1.500l3.500 4h-2v8h-12v-4h8v-4H8z",
	curveRight: "M12 1.500C-1 1-1 12 8 13v2.500l5-4-5-4V10C3 9 3 4 12 4.500z",
	curveLeft: "M4 1.500c13 0 13 11.500 4 11.500v2.500l-5-4 5-4V10c5-1 5-6-4-5.500z",
	curveUp: "M.5 5.500h3c0 7 6 7 7 1.500H8l4-5 3.500 5h-2c0 8-13 9-13-1.500z",
	curveDown: "M.5 10.500h3c0-6 5-6 7-1H8l4 5 3.500-5h-2c0-8-13-9-13 1z",
	striped: "M6 5.500h3v-4L15.500 8 9 14.500v-4H6z|~M1 5v6M3.500 5v6",
	notched: "M.5 4.500h8v-3L15.500 8l-7 6.500v-3H.5L3.500 8z",
	tag: "M.5 3.500h10l5 4.500-5 4.500H.5z",
	chevron: "M2.500 2.500h5l6 5.500-6 5.500h-5L8 8z",
	callR: "M.5 1.500h9v4h3v-2L15.500 8l-3 4.500v-2h-3v4h-9z",
	callD: "M.5 1.500h15v8h-5v3h2L8 15.500l-4.500-3h2v-3h-5z",
	callL: "M15.500 1.500h-9v4h-3v-2L.500 8l3 4.500v-2h3v4h9z",
	callU: "M.5 15.500h15v-9h-5v-3h2L8 .500l-4.500 3h2v3h-5z",
	callLR: "M4.500 1.500h7v4h1v-2l3 4.500-3 4.500v-2h-1v4h-7v-4h-1v2L.500 8l3-4.500v2h1z",
	callQuad: "M8 .500l3 3H9.500v1h2v2h1V5l3 3-3 3V9.500h-1v2h-2v1H11l-3 3-3-3h1.500v-1h-2v-2h-1V11l-3-3 3-3v1.500h1v-2h2v-1H5z",
	circular: "M.5 9.500C1 0 13 0 13 8h2.500L11 13.500 7 8h2.500c0-4-5-4-5 1.500z",
	fDiamond: "M8 4.500l7.500 3.500L8 11.500.500 8z",
	fPred: "M.5 2.500h15v11H.5z|~M3.500 2v12M12.500 2v12",
	fInt: "M1.500 1.500h13v13h-13z|~M4.500 1v13M1 4.500h13",
	fDoc: "M.5 2.500h15v9c-6-1-8 4-15 2z",
	fDocs: "M5.500 1.500h10v7h-2v2h-2v2c-4 0-6 3-11 1v-8h3v-2h2z|~M.5 5.500h11v6M3.500 3.500h10v6",
	fTerm: "M4 5.500h8q3.500 1 3.500 3t-3.500 3H4q-3.500-1-3.500-3t3.500-3z",
	fPrep: "M4 3.500h8q3.500 2 3.500 4.500t-3.500 4.500H4Q.500 10.500.500 8T4 3.500z",
	fManual: "M.5 7.500l15-5v11H.5z",
	fConn: "M8 3.500a4.500 4.500 0 1 1 0 9 4.500 4.500 0 0 1 0-9z",
	fOff: "M3.500 4.500h9v6l-4.500 4-4.500-4z",
	fCard: "M4.500 2.500h11v11H.5v-7z",
	fTape: "M.5 2.500c3 3 5 3 7.500 1s5-2 7.500-1v11c-3-2-5-2-7.500 0s-5 2-7.500 0z",
	fJunc: "M8 .500a7.500 7.500 0 1 1 0 15 7.500 7.500 0 0 1 0-15z|~M3 3l10 10M13 3L3 13",
	fOr: "M8 .500a7.500 7.500 0 1 1 0 15 7.500 7.500 0 0 1 0-15z|~M8 1v14M1 8h14",
	fCollate: "M4.500 1.500h7L8.500 8l3 6.500h-7l3-6.500z",
	fSort: "M8 .500L12 8l-4 7.500L4 8z|~M4 8h8",
	fMerge: "M1.500 2.500h13L8 14.500z",
	fStored: "M4 2.500h11.500c-4 3-4 8 0 11H4C0 12 0 4 4 2.500z",
	fDelay: "M1.500 1.500H8c10 0 10 13 0 13H1.500z",
	fSeq: "M8 1.500a7 6.500 0 1 1 0 13 7 6.500 0 0 1 0-13z|~M8 14.500h7.500M12 12.500h3v2",
	fDirect: "M3 2.500h10c3 1 3 10 0 11H3c-3-1-3-10 0-11z|~M12 3c-2 2-2 8 0 10",
	cRect: "M1.500 2.500h13v8H9L6.500 14 5 10.500H1.500z",
	cRound: "M3.500 2.500h9l2 2v4l-2 2H9L6.500 14 5 10.500H3.500l-2-2v-4z",
	cOval: "M8 1.500c9 0 10 9 0 9.500L2 14.500l2-4.500C-2 7 2 1.500 8 1.500z",
	cCloud: "M4 4c1-3 4-2 5-1 3-2 5 0 4.500 2 3 2 1 5-1.500 4-1 3-5 2-6 1-3 1-4-1-3.500-3C0 6 2 3.500 4 4z|~M3 12.500h2M1 14.500h2",
	cl1: "M6.500 3.500h9v7h-9z|~M0 12.500h16",
	cl2: "M6.500 3.500h9v7h-9z|~M1 13.500l5-8",
	cl3: "M6.500 3.500h9v7h-9z|~M1 13.500l2-7h3",
	cl4: "M6.500 3.500h9v7h-9z|~M6 6.500H1.500v6l4 3",
	cd1: ".M7.500 3.500h8v7h-8z|~M0 11.500h6.500V3",
	cd2: ".M7.500 3.500h8v7h-8z|~M1 13.500l5-8M5.500 3v8",
	cd3: ".M7.500 3.500h8v7h-8z|~M1 13.500l2-7h3M5.500 3v8",
	cd4: ".M7.500 3.500h8v7h-8z|~M6 6.500H1.500v6l4 3",
	ce1: "M8.500 3.500h7v8h-7z|~M1 11.500h4.500V3",
	ce2: "M8.500 3.500h7v8h-7z|~M1 13.500l4-8M6.500 3v9",
	ce3: "M8.500 3.500h7v8h-7z|~M1 13.500l2-7h3M6.500 3v9",
	ce4: "M8.500 3.500h7v8h-7z|~M6 3.500v8M6 6.500H1.500v6l3 2",
	boom: "M8 4l1-3 1.500 3L14 2l-1 3h3l-3 2 2.500 3-3.500-1 1 4-3-2.500-1 4-2-3.500L4 14.500 4 11l-3.500 0L3 8 .500 4l4 1L4 1.500z",
	boom2: "M8 3l2-2 .500 3L14 1.500 12.500 5l3 0L13 7.500l2.500 2-3 .500 1 3.500L10 12l-1 3.500-2-3L4 15v-4l-3.500.500L3 8.500.500 6l3-1-1-3L5.500 4 6 .500z",
	star4: "M8 .500L9.500 6.500l6 1.500-6 1.500L8 15.500 6.500 9.500.500 8l6-1.500z",
	star5: "M8 .500l2 5h5.500l-4 4 1.500 5.500L8 12l-5 3 1.500-5.500-4-4H6z",
	star8: "M8 .500L10 2.500h3.500V6l2 2-2 2v3.500H10l-2 2-2-2H2.500V10l-2-2 2-2V2.500H6z|t:8",
	star16: "M8 .500l1 1.500L11 1l.500 2 2-.500v2l2 .500L14.500 7l1 1-1 1 1 2-2 .500v2l-2-.500L11 15l-2-1-1 1.500L7 14l-2 1-.500-2-2 .500v-2l-2-.500 1-2-1-1 1-1-1-2 2-.500v-2l2 .500L5 1l2 1z|t:16",
	ribUp: "M.5 12.500l2-3-2-3h4v-3h7v3h4l-2 3 2 3h-4v-2h-7v2z|~M4.500 6v4M11.500 6v4",
	ribDown: "M.5 3.500h4v2h7v-2h4l-2 3 2 3h-4v3h-7v-3h-4l2-3z|~M4.500 5v5M11.500 5v5",
	ribCurve: "M.5 13.500l1-3-1-4 3-1c0-4 9-4 9 0l3 1-1 4 1 3-4-1V9C9 8 7 8 4.500 9v3.500z|~M3.500 5v5M12.500 5v5",
	ribCurve2: "M.5 2.500l4 1V7c2 1 4 1 7 0V3.500l4-1-1 4 1 3-3 1.500c0 4-9 4-9 0l-3-1.500 1-3z|~M4.500 6v5M11.500 6v5",
	scrollV: "M4.500 1.500h10q1 2-1 3h-1v10h-11q-1-2 1-3h1v-8z|~M4.500 1.500q3 1 1 3h7M3 11.500v3",
	scrollH: "M2.500 4.500h11v-3q2-.500 2 1v8l-2 1h-11v3q-2 0-2-1v-8z|~M2.500 4.500v7M13.500 4.500q3 0 2-2",
	wave: "M.5 3.500c5-5 8 5 15 0v10c-7 5-10-5-15 0z",
	wave2: "M.5 2.500c3-2 5 0 7.500 3 2-3 5-5 7.500-3v12c-2-3-5-3-7.500 0-2-3-5-3-7.500 0z"
};
icons.star24 = icons.star16.replace("t:16", "t:24");
icons.star32 = icons.star16.replace("t:16", "t:32");

var sections = [
	["最近使用的形状", "pill text vtext line arrow rect oval rounded tri elbow elbowArrow right down freeform scribble arc curve lbrace"],
	["线条", "line arrow arrow2 elbow elbowArrow elbowArrow2 scurve scurveArrow scurveArrow2 curve freeform scribble"],
	["基本形状", "text vtext rect para trapInv diamond rounded octagon tri rtri oval hex plus pent can cube bevel fold smiley donut no blockArc heart bolt sun moon arc brackets braces plaque lbracket rbracket lbrace rbrace"],
	["箭头总汇", "right left up down leftRight upDown quad triArrow bent uturn leftUp bentUp curveRight curveLeft curveUp curveDown striped notched tag chevron callR callD callL callU callLR callQuad circular"],
	["流程图", "rect pill fDiamond para fPred fInt fDoc fDocs fTerm fPrep fManual trapInv fConn fOff fCard fTape fJunc fOr fCollate fSort tri fMerge fStored fDelay fSeq can fDirect hex"],
	["标注", "cRect cRound cOval cCloud cl1 cl2 cl3 cl4 cd1 cd2 cd3 cd4 cd1 cd2 cd3 cd4 ce1 ce2 ce3 ce4"],
	["星与旗帜", "boom boom2 star4 star5 star8 star16 star24 star32 ribUp ribDown ribCurve ribCurve2 scrollV scrollH wave wave2"]
];

function drawIcon(name) {
	var out = "";
	icons[name].split("|").forEach(function (part) {
		if (part[0] === "~") out += '<path class="nofill" d="' + part.slice(1) + '"/>';
		else if (part[0] === ".") out += '<path class="dot" d="' + part.slice(1) + '"/>';
		else if (part.slice(0, 2) === "t:") out += '<text x="8" y="10.5">' + part.slice(2) + '</text>';
		else if (part.slice(0, 2) === "a:") {
			var a = part.slice(2).split(",");
			out += '<text x="' + a[0] + '" y="' + a[1] + '">' + a[2] + '</text>';
		}
		else out += '<path d="' + part + '"/>';
	});
	return '<svg width="16" height="16" viewBox="0 0 16 16">' + out + '</svg>';
}

var html = "";
sections.forEach(function (s, n) {
	html += "<h2>" + s[0] + '</h2><div class="shapes">';
	s[1].split(" ").forEach(function (name, i) {
		var hot = n === 1 && i === 1 ? ' class="hot"' : "";
		html += "<button" + hot + ' aria-label="' + name + '">' + drawIcon(name) + "</button>";
	});
	html += "</div>";
});
document.getElementById("sections").innerHTML = html;

// rulers
var h = "";
for (var i = -8; i <= 48; i += 2) h += "<span>" + (i === 0 ? "" : Math.abs(i)) + "</span>";
document.getElementById("hnums").innerHTML = h;

var v = "";
for (var j = -4; j <= 16; j += 2) v += "<span>" + (j === 0 ? "" : Math.abs(j)) + "</span>";
document.getElementById("vnums").innerHTML = v;
```
